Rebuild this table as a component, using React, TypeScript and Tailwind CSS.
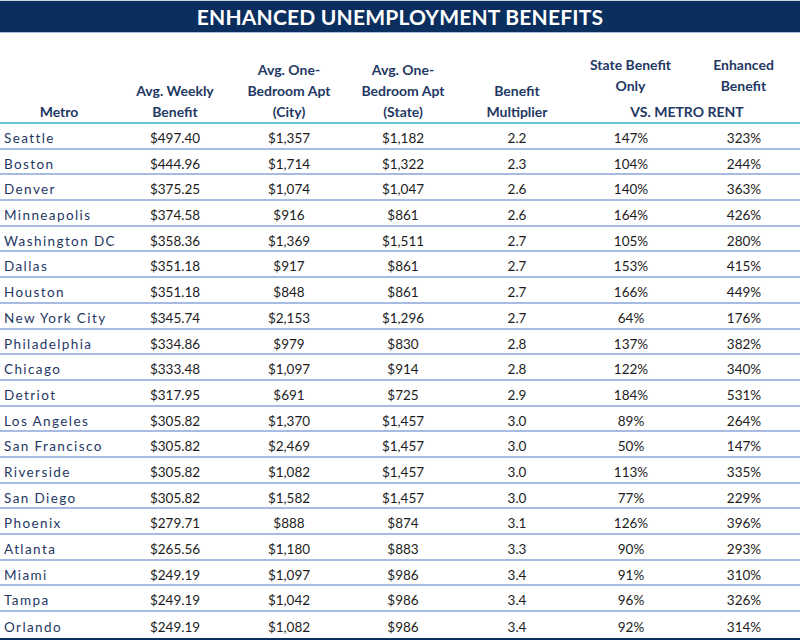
import React from "react";

const rows: [string, string, string, string, string, string, string][] = [
  ["Seattle", "$497.40", "$1,357", "$1,182", "2.2", "147%", "323%"],
  ["Boston", "$444.96", "$1,714", "$1,322", "2.3", "104%", "244%"],
  ["Denver", "$375.25", "$1,074", "$1,047", "2.6", "140%", "363%"],
  ["Minneapolis", "$374.58", "$916", "$861", "2.6", "164%", "426%"],
  ["Washington DC", "$358.36", "$1,369", "$1,511", "2.7", "105%", "280%"],
  ["Dallas", "$351.18", "$917", "$861", "2.7", "153%", "415%"],
  ["Houston", "$351.18", "$848", "$861", "2.7", "166%", "449%"],
  ["New York City", "$345.74", "$2,153", "$1,296", "2.7", "64%", "176%"],
  ["Philadelphia", "$334.86", "$979", "$830", "2.8", "137%", "382%"],
  ["Chicago", "$333.48", "$1,097", "$914", "2.8", "122%", "340%"],
  ["Detriot", "$317.95", "$691", "$725", "2.9", "184%", "531%"],
  ["Los Angeles", "$305.82", "$1,370", "$1,457", "3.0", "89%", "264%"],
  ["San Francisco", "$305.82", "$2,469", "$1,457", "3.0", "50%", "147%"],
  ["Riverside", "$305.82", "$1,082", "$1,457", "3.0", "113%", "335%"],
  ["San Diego", "$305.82", "$1,582", "$1,457", "3.0", "77%", "229%"],
  ["Phoenix", "$279.71", "$888", "$874", "3.1", "126%", "396%"],
  ["Atlanta", "$265.56", "$1,180", "$883", "3.3", "90%", "293%"],
  ["Miami", "$249.19", "$1,097", "$986", "3.4", "91%", "310%"],
  ["Tampa", "$249.19", "$1,042", "$986", "3.4", "96%", "326%"],
  ["Orlando", "$249.19", "$1,082", "$986", "3.4", "92%", "314%"],
];

const cols = "grid grid-cols-[118px_114px_114px_114px_114px_114px_112px]";

export default function App() {
  return (
    <div
      className="w-[800px] h-[640px] bg-white overflow-hidden flex flex-col"
      style={{ fontFamily: "Lato, 'Open Sans', sans-serif" }}
    >
      <div className="h-[1px] bg-[#c9d3e3]" />
      <div className="h-[31px] bg-[#0a2f5f] flex items-center justify-center">
        <span className="text-white font-bold text-[21px] tracking-[0.2px] leading-none">
          ENHANCED UNEMPLOYMENT BENEFITS
        </span>
      </div>
      <div className="h-[1px] bg-[#a9bfe3]" />
      <div className={`${cols} h-[89px] text-[#1f3864] font-bold text-[14px] leading-[21px] text-center`}>
        <div className="flex flex-col justify-end">Metro</div>
        <div className="flex flex-col justify-end">
          <div>Avg. Weekly</div>
          <div>Benefit</div>
        </div>
        <div className="flex flex-col justify-end">
          <div>Avg. One-</div>
          <div>Bedroom Apt</div>
          <div>(City)</div>
        </div>
        <div className="flex flex-col justify-end">
          <div>Avg. One-</div>
          <div>Bedroom Apt</div>
          <div>(State)</div>
        </div>
        <div className="flex flex-col justify-end">
          <div>Benefit</div>
          <div>Multiplier</div>
        </div>
        <div className="col-span-2 flex flex-col justify-end">
          <div className="grid grid-cols-2 mb-[5px]">
            <div>
              <div>State Benefit</div>
              <div>Only</div>
            </div>
            <div>
              <div>Enhanced</div>
              <div>Benefit</div>
            </div>
          </div>
          <div>VS. METRO RENT</div>
        </div>
      </div>
      <div className="h-[2px] bg-[#66c2dd]" />
      <div className="flex flex-col">
        {rows.map((r, i) => (
          <div
            key={r[0]}
            className={`${cols} h-[25.7px] pt-[4px] items-center text-[13.5px] text-[#1c1c1c] ${
              i < rows.length - 1 ? "border-b-2 border-[#a8bbe2]" : ""
            }`}
          >
            <div className="pl-[4px] text-[#1f3864] tracking-[1.4px] whitespace-nowrap">{r[0]}</div>
            <div className="text-center">{r[1]}</div>
            <div className="text-center">{r[2]}</div>
            <div className="text-center">{r[3]}</div>
            <div className="text-center">{r[4]}</div>
            <div className="text-center">{r[5]}</div>
            <div className="text-center">{r[6]}</div>
          </div>
        ))}
      </div>
      <div className="flex-1 bg-[#0a2f5f]" />
    </div>
  );
}
